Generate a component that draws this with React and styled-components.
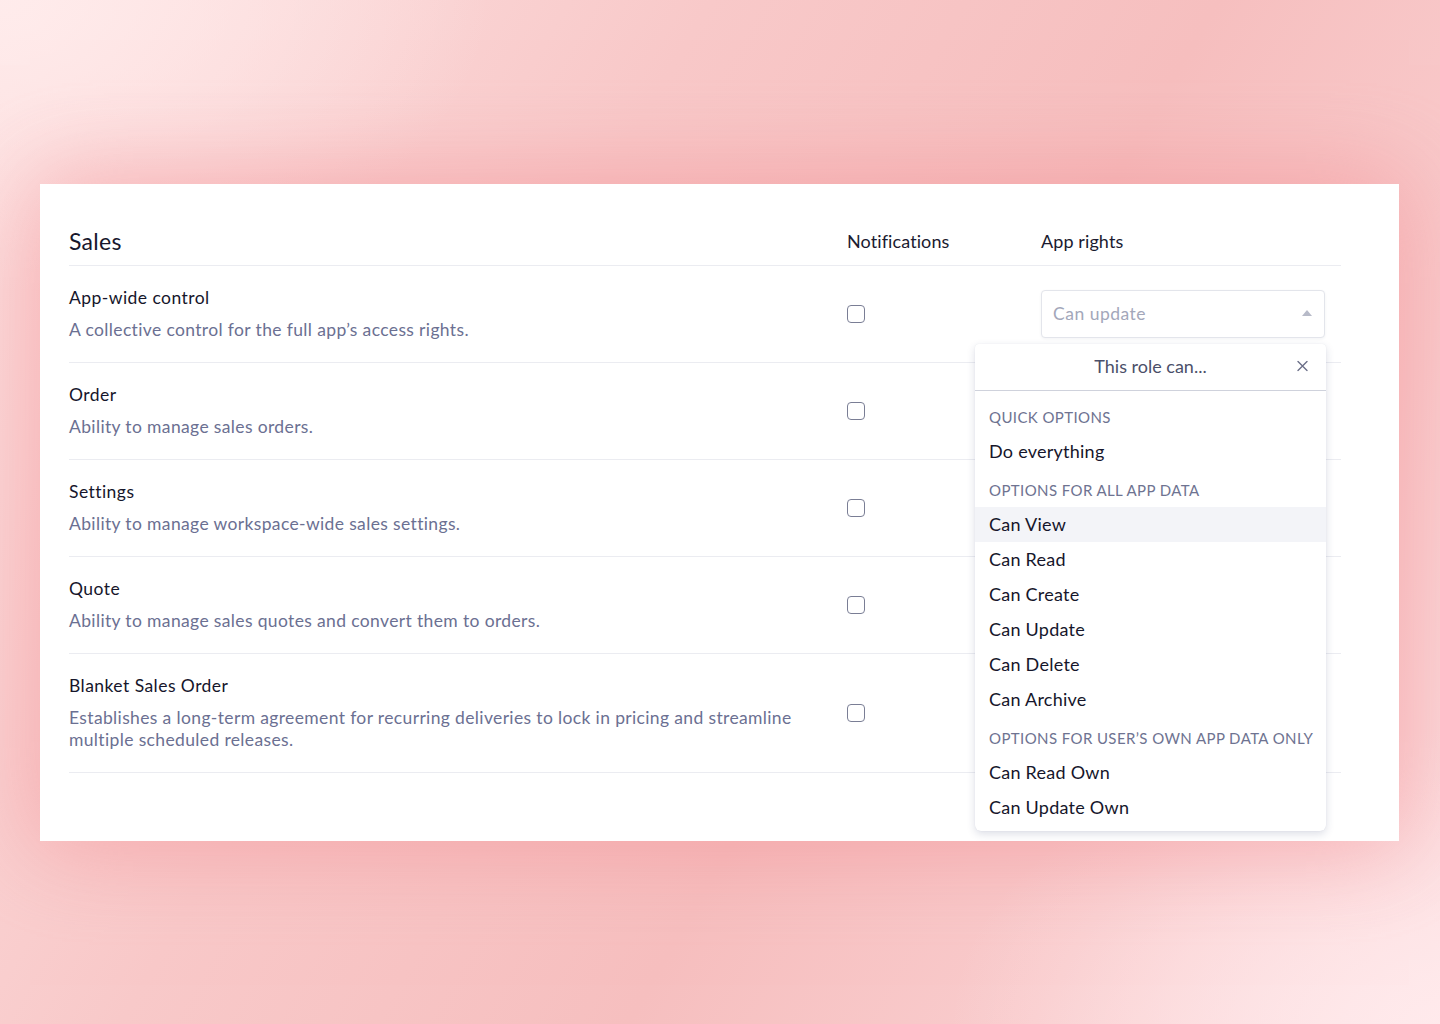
import React from "react";
import styled, { createGlobalStyle } from "styled-components";

const Global = createGlobalStyle`
  html, body { margin: 0; padding: 0; }
  body {
    font-family: "Lato", "Noto Sans", sans-serif;
    -webkit-font-smoothing: antialiased;
  }
  * { box-sizing: border-box; }
`;

const Page = styled.div`
  width: 1440px;
  height: 1024px;
  overflow: hidden;
  padding: 184px 41px 0 40px;
  background:
    radial-gradient(ellipse 700px 420px at 0% 0%, rgba(255, 236, 236, 0.95), rgba(255, 236, 236, 0) 70%),
    radial-gradient(ellipse 700px 420px at 100% 100%, rgba(255, 234, 236, 0.95), rgba(255, 234, 236, 0) 70%),
    linear-gradient(120deg, #fde2e2 0%, #f8c9c9 35%, #f6bfbf 60%, #f9cccd 80%, #fde3e5 100%);
`;

const Card = styled.div`
  width: 1359px;
  height: 657px;
  background: #ffffff;
  padding: 0 58px 0 29px;
  box-shadow: 0 0 90px 10px rgba(242, 140, 145, 0.55);
`;

const Grid = styled.div`
  display: grid;
  grid-template-columns: 1fr 194px 300px;
`;

const HeaderRow = styled(Grid)`
  padding: 43px 0 10px;
  border-bottom: 1px solid #ebecf1;
  align-items: center;
`;

const SectionTitle = styled.div`
  font-size: 23px;
  line-height: 28px;
  color: #17172c;
  letter-spacing: 0.3px;
`;

const ColHead = styled.div`
  font-size: 18px;
  line-height: 28px;
  color: #1b1b30;
  letter-spacing: 0.1px;
`;

const Row = styled(Grid)`
  padding: 21px 0;
  border-bottom: 1px solid #ebecf1;
  align-items: center;
`;

const Info = styled.div`
  max-width: 740px;
`;

const Title = styled.div`
  font-size: 17.5px;
  line-height: 22px;
  color: #16162b;
  letter-spacing: 0.45px;
`;

const Desc = styled.div`
  margin-top: 10px;
  font-size: 17.5px;
  line-height: 22px;
  color: #6b7092;
  letter-spacing: 0.36px;
`;

const Check = styled.span`
  display: block;
  width: 18px;
  height: 18px;
  border: 1.5px solid #7a7e95;
  border-radius: 4px;
`;

const RightsCell = styled.div`
  position: relative;
  height: 22px;
  display: flex;
  align-items: center;
`;

const Select = styled.div`
  position: absolute;
  left: 0;
  top: 50%;
  transform: translateY(-50%);
  width: 284px;
  height: 48px;
  border: 1px solid #e3e5eb;
  border-radius: 4px;
  box-shadow: 0 1px 3px rgba(40, 50, 90, 0.06);
  display: flex;
  align-items: center;
  justify-content: space-between;
  padding: 0 12px 2px 11px;
  font-size: 17.5px;
  letter-spacing: 0.5px;
  color: #a3a7ba;
  background: #fff;
`;

const Menu = styled.div`
  position: absolute;
  right: 15px;
  top: 41px;
  width: 351px;
  background: #fff;
  border-radius: 4px 4px 6px 6px;
  box-shadow: 0 3px 8px rgba(40, 50, 100, 0.16), 0 0 1px rgba(40, 50, 100, 0.12);
  z-index: 5;
`;

const MenuHead = styled.div`
  position: relative;
  height: 47px;
  padding-bottom: 3px;
  border-bottom: 1px solid #cfd2dc;
  display: flex;
  align-items: center;
  justify-content: center;
  font-size: 18px;
  color: #4b4f69;
`;

const Close = styled.span`
  position: absolute;
  right: 18px;
  top: 50%;
  transform: translateY(-60%);
  display: flex;
`;

const MenuList = styled.div`
  padding: 5px 0 6px;
`;

const GroupLabel = styled.div`
  padding: 12px 14px 6px;
  font-size: 15px;
  line-height: 18px;
  margin-bottom: 2px;
  letter-spacing: 0.4px;
  color: #6e7391;
  text-transform: uppercase;
  white-space: nowrap;
`;

const Item = styled.div`
  height: 35px;
  padding: 0 14px 2px;
  display: flex;
  align-items: center;
  font-size: 18px;
  letter-spacing: 0.25px;
  color: #16162b;
  background: ${(p) => (p.$active ? "#f3f4f8" : "transparent")};
`;

const rows = [
  { t: "App-wide control", d: "A collective control for the full app’s access rights." },
  { t: "Order", d: "Ability to manage sales orders." },
  { t: "Settings", d: "Ability to manage workspace-wide sales settings." },
  { t: "Quote", d: "Ability to manage sales quotes and convert them to orders." },
  {
    t: "Blanket Sales Order",
    d: "Establishes a long-term agreement for recurring deliveries to lock in pricing and streamline multiple scheduled releases.",
  },
];

const groups = [
  { label: "Quick options", items: ["Do everything"] },
  {
    label: "Options for all app data",
    items: ["Can View", "Can Read", "Can Create", "Can Update", "Can Delete", "Can Archive"],
  },
  { label: "Options for user’s own app data only", items: ["Can Read Own", "Can Update Own"] },
];

function Dropdown() {
  return (
    <Menu>
      <MenuHead>
        This role can...
        <Close>
          <svg width="11" height="11" viewBox="0 0 11 11">
            <path d="M1 1L10 10M10 1L1 10" stroke="#6b6f88" strokeWidth="1.4" strokeLinecap="round" />
          </svg>
        </Close>
      </MenuHead>
      <MenuList>
        {groups.map((g) => (
          <React.Fragment key={g.label}>
            <GroupLabel>{g.label}</GroupLabel>
            {g.items.map((it) => (
              <Item key={it} $active={it === "Can View"}>
                {it}
              </Item>
            ))}
          </React.Fragment>
        ))}
      </MenuList>
    </Menu>
  );
}

export default function App() {
  return (
    <Page>
      <Global />
      <Card>
        <HeaderRow>
          <SectionTitle>Sales</SectionTitle>
          <ColHead>Notifications</ColHead>
          <ColHead>App rights</ColHead>
        </HeaderRow>
        {rows.map((r, i) => (
          <Row key={r.t}>
            <Info>
              <Title>{r.t}</Title>
              <Desc>{r.d}</Desc>
            </Info>
            <div>
              <Check />
            </div>
            <RightsCell>
              {i === 0 && (
                <>
                  <Select>
                    <span>Can update</span>
                    <svg width="10" height="6" viewBox="0 0 10 6">
                      <path d="M0 6L5 0L10 6Z" fill="#b7bac8" />
                    </svg>
                  </Select>
                  <Dropdown />
                </>
              )}
            </RightsCell>
          </Row>
        ))}
      </Card>
    </Page>
  );
}
